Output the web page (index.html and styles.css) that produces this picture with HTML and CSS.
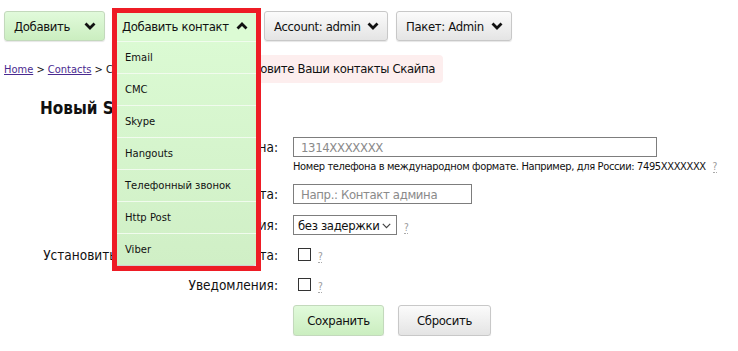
FILE: index.html
```html
<!DOCTYPE html>
<html>
<head>
  <meta charset="utf-8">
  <title>Новый Skype контакт</title>
  <link rel="stylesheet" href="styles.css">
</head>
<body>

  <div class="toolbar">
    <button class="btn btn-green btn-add">Добавить
      <svg class="chev" width="12" height="8" viewBox="0 0 12 8"><polyline points="1.5,1.5 6,6 10.5,1.5"/></svg>
    </button>

    <div class="dropdown">
      <button class="btn btn-open">Добавить контакт
        <svg class="chev" width="12" height="8" viewBox="0 0 12 8"><polyline points="1.5,6.5 6,2 10.5,6.5"/></svg>
      </button>
      <ul class="menu">
        <li>Email</li>
        <li>СМС</li>
        <li>Skype</li>
        <li>Hangouts</li>
        <li>Телефонный звонок</li>
        <li>Http Post</li>
        <li>Viber</li>
      </ul>
      <div class="highlight"></div>
    </div>

    <button class="btn btn-gray btn-account">Account: admin
      <svg class="chev" width="12" height="8" viewBox="0 0 12 8"><polyline points="1.5,1.5 6,6 10.5,1.5"/></svg>
    </button>
    <button class="btn btn-gray btn-plan">Пакет: Admin
      <svg class="chev" width="12" height="8" viewBox="0 0 12 8"><polyline points="1.5,1.5 6,6 10.5,1.5"/></svg>
    </button>
  </div>

  <div class="crumbs-row">
    <div class="crumbs"><a href="#">Home</a> &gt; <a href="#">Contacts</a> &gt; Создать</div>
    <div class="alert">Установите Ваши контакты Скайпа</div>
  </div>

  <h2 class="title">Новый Skype контакт</h2>

  <form class="form">
    <label class="lbl">Номер телефона:</label>
    <div class="field">
      <input class="txt txt-phone" type="text" placeholder="1314XXXXXXX">
      <div class="hint">Номер телефона в международном формате. Например, для России: 7495XXXXXXX <span class="q">?</span></div>
    </div>

    <label class="lbl">Название контакта:</label>
    <div class="field">
      <input class="txt txt-name" type="text" placeholder="Напр.: Контакт админа">
    </div>

    <label class="lbl">Задержка уведомления:</label>
    <div class="field">
      <div class="sel-wrap">
        <select class="sel">
          <option>без задержки</option>
        </select>
        <svg class="sel-arrow" width="9" height="6" viewBox="0 0 9 6"><polyline points="0.8,0.8 4.5,4.6 8.2,0.8"/></svg>
      </div>
      <span class="q">?</span>
    </div>

    <label class="lbl">Установить основным для контакта:</label>
    <div class="field">
      <input class="chk" type="checkbox">
      <span class="q">?</span>
    </div>

    <label class="lbl">Уведомления:</label>
    <div class="field">
      <input class="chk" type="checkbox">
      <span class="q">?</span>
    </div>

    <div></div>
    <div class="actions">
      <button type="button" class="btn btn-green btn-save">Сохранить</button>
      <button type="reset" class="btn btn-gray btn-reset">Сбросить</button>
    </div>
  </form>

</body>
</html>
```

FILE: styles.css
```css
body {
  margin: 0;
  padding: 11px 4px 0;
  font: 13px "DejaVu Sans Condensed", "DejaVu Sans", sans-serif;
  letter-spacing: -0.35px;
  color: #111;
  background: #fff;
}

/* toolbar */
.toolbar { display: flex; gap: 8px; height: 30px; }

.btn {
  box-sizing: border-box;
  height: 30px;
  display: inline-flex;
  align-items: center;
  justify-content: space-between;
  padding: 0 8px 0 9px;
  border: 1px solid #c8c8c8;
  border-radius: 3px;
  font: inherit;
  letter-spacing: inherit;
  color: #111;
  box-shadow: 0 1px 1px rgba(0,0,0,0.10);
}
.btn-green { background: linear-gradient(#e1fadb, #cbeec0); border-color: #c3d9bc; }
.btn-gray  { background: linear-gradient(#fbfbfb, #e4e4e4); }

.btn-add     { width: 101px; }
.btn-account { width: 124px; }
.btn-plan    { width: 116px; }

.chev { fill: none; stroke: #111; stroke-width: 2.8; stroke-linejoin: miter; }

.dropdown { position: relative; width: 143px; }
.btn-open {
  width: 143px;
  background: #dcfbd4;
  border: none;
  border-radius: 3px 3px 0 0;
  box-shadow: none;
}

.menu {
  position: absolute;
  top: 30px;
  left: 0;
  width: 143px;
  margin: 0;
  padding: 0;
  list-style: none;
  border-top: 1px solid #f1fcee;
  border-radius: 0 0 3px 3px;
  background: linear-gradient(#dbfad3, #d0efc6);
  box-shadow: 0 1px 2px rgba(0,0,0,0.25);
}
.menu li {
  height: 31px;
  padding-left: 12px;
  border-bottom: 1px solid #f1fbee;
  font: 10px/31px "DejaVu Sans", sans-serif;
  letter-spacing: 0;
  color: #111;
}
.menu li:last-child { border-bottom: none; }

.highlight {
  position: absolute;
  left: -1px;
  top: -3px;
  width: 149px;
  height: 263px;
  box-sizing: border-box;
  border: 5px solid #ee1c25;
  pointer-events: none;
}

/* breadcrumbs + notice */
.crumbs-row { display: flex; align-items: center; margin-top: 14px; height: 28px; }
.crumbs { font-size: 11px; letter-spacing: 0; }
.crumbs a { color: #4a2a90; }
.alert {
  margin-left: 70px;
  height: 28px;
  line-height: 28px;
  padding: 0 8px;
  border-radius: 4px;
  background: #fdeeee;
}

.title {
  margin: 15px 0 19px 36px;
  font: bold 17px/20px "DejaVu Sans Condensed", "DejaVu Sans", sans-serif;
  letter-spacing: 0;
}

/* form */
.form {
  display: grid;
  grid-template-columns: 274px auto;
  grid-template-rows: 47px 31px 30px 30px 30px auto;
  column-gap: 15px;
}
.lbl { text-align: right; font-size: 13.5px; line-height: 20px; letter-spacing: 0; white-space: nowrap; }
.field { display: flex; flex-wrap: wrap; align-items: center; align-content: flex-start; height: 20px; }

.txt {
  box-sizing: border-box;
  height: 20px;
  padding: 0 7px;
  border: 1px solid #7d7d7d;
  font: inherit;
  letter-spacing: inherit;
  color: #111;
}
.txt::placeholder { color: #8a8a8a; }
.txt-phone { width: 364px; }
.txt-name { width: 179px; }

.hint { width: 100%; margin-top: 3px; font-size: 11px; line-height: 14px; white-space: nowrap; }

.sel-wrap { position: relative; height: 20px; }
.sel {
  appearance: none;
  box-sizing: border-box;
  width: 104px;
  height: 20px;
  padding: 0 0 0 4px;
  border: 1px solid #7d7d7d;
  border-radius: 0;
  background: #fff;
  font: inherit;
  letter-spacing: inherit;
  color: #111;
}
.sel-arrow {
  position: absolute;
  right: 6px;
  top: 8px;
  fill: none;
  stroke: #444;
  stroke-width: 1.2;
}

.chk {
  appearance: none;
  box-sizing: border-box;
  width: 13px;
  height: 13px;
  margin: 0 0 0 5px;
  border: 1px solid #333;
  background: #fff;
}

.q {
  margin: 6px 0 0 7px;
  font-size: 10px;
  line-height: 11px;
  color: #999;
  border-bottom: 1px dotted #aaa;
}
.hint .q { margin-left: 4px; }

.actions { display: flex; gap: 14px; }
.btn-save, .btn-reset { height: 31px; justify-content: center; padding: 0; }
.btn-save { width: 91px; }
.btn-reset { width: 93px; }
```
